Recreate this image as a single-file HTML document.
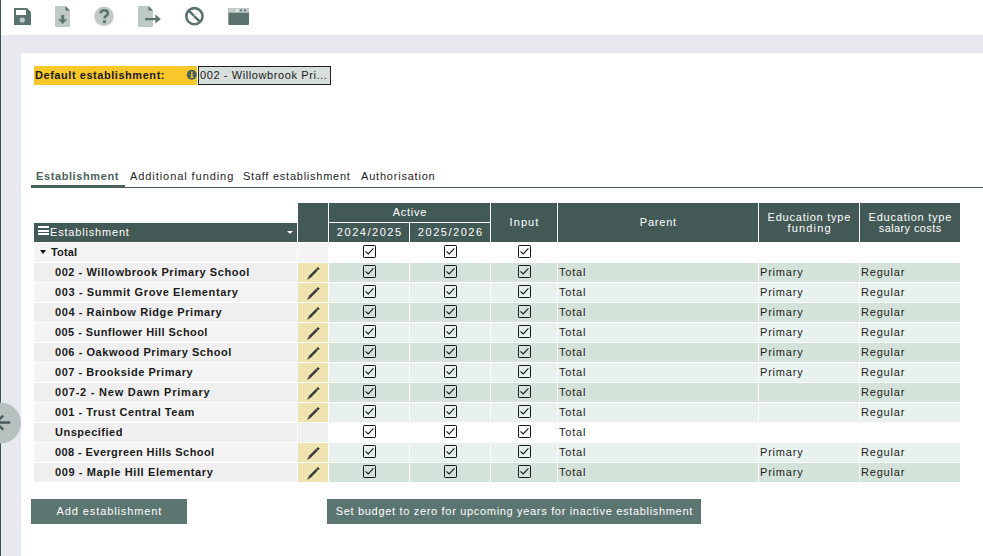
<!DOCTYPE html>
<html><head><meta charset="utf-8">
<style>
*{box-sizing:border-box;margin:0;padding:0}
html,body{width:983px;height:556px;overflow:hidden;background:#fff;font-family:"Liberation Sans",sans-serif;color:#1a1a1a}
#edge{position:absolute;left:0;top:0;width:1px;height:556px;background:#3d5450}
#band{position:absolute;left:1px;top:35px;width:982px;height:521px;background:#e8e9ee}
#content{position:absolute;left:21px;top:53px;width:962px;height:503px;background:#fff}
#deflbl{position:absolute;left:34px;top:66px;width:163px;height:19px;background:#f8c72a;font-weight:bold;font-size:11px;letter-spacing:.55px;line-height:19px;padding-left:1px}
#definfo{position:absolute;left:187px;top:70px;width:10px;height:10px;border-radius:50%;background:#4b605c;color:#fff;font-size:8px;line-height:10px;text-align:center;font-weight:bold}
#defval{position:absolute;left:198px;top:66px;width:133px;height:19px;background:#d7dedb;border:1px solid #222;font-size:11px;letter-spacing:.6px;line-height:17px;padding-left:1px;color:#1a1a1a;white-space:nowrap;overflow:hidden}
#tabs{position:absolute;left:32px;top:165px;width:951px;height:23px;border-bottom:1px solid #4b605c}
.tab{position:absolute;top:0;height:22px;font-size:11px;line-height:22px;color:#1e1e1e}
.tab.act{font-weight:bold;color:#4b605c;border-bottom:3px solid #4b605c}
.c{position:absolute;font-size:11px;line-height:19px;white-space:nowrap;overflow:hidden}
.h{background:#435955;color:#fff;text-align:center}
.hl{text-align:left}
.hamb{position:absolute;left:4px;top:3px;width:11px;height:9px}
.hamb i{display:block;height:2px;background:#fff;margin-bottom:1.5px}
.ht{position:absolute;left:16px;top:0}
.dd{position:absolute;right:4.5px;top:7.8px;width:0;height:0;border-left:3.7px solid transparent;border-right:3.7px solid transparent;border-top:3.8px solid #fff}
.t1,.t2{display:block}
.t3{display:block;line-height:39px}
.t4{display:block;line-height:11px;padding-top:9px}
.e1{background:#f4f4f4}
.e2{background:#efefef}
.ed{background:#efe3b0}
.wh{background:#fff}
.g1{background:#d4e3d9}
.g2{background:#e8f1ee}
.tri{position:absolute;left:5.5px;top:7px;width:0;height:0;border-left:3.5px solid transparent;border-right:3.5px solid transparent;border-top:4px solid #111}
.nm{position:absolute;left:21px;top:0;font-weight:bold;font-size:11px}
.nm.tot{left:17px}
.pen{position:absolute;left:0;top:0}
.ck{position:absolute;left:50%;top:2px;margin-left:-6px;width:13px;height:13px}
.ck svg{display:block}
.tx{padding-left:1px;letter-spacing:.8px;color:#1c1c1c}
.btn{position:absolute;background:#5b7570;color:#fff;font-size:11px;text-align:center}

</style></head><body>
<div id="edge"></div>
<div id="band"></div>
<div id="content"></div>
<svg id="icons" style="position:absolute;left:0;top:0" width="260" height="35" viewBox="0 0 260 35">
 <!-- save -->
 <path d="M14 8.5 Q14 8 14.5 8 L27 8 L31 12 L31 24.5 Q31 25 30.5 25 L14.5 25 Q14 25 14 24.5 Z" fill="#5a736e"/>
 <rect x="16" y="10" width="10" height="5" fill="#fff"/>
 <circle cx="22.3" cy="20" r="2.6" fill="#c2cbc8"/>
 <!-- download -->
 <path d="M56 6 L65.5 6 L70 10.5 L70 26 Q70 27 69 27 L56 27 Q55 27 55 26 L55 7 Q55 6 56 6 Z" fill="#bfcac7"/>
 <path d="M65.5 6 L70 10.5 L65.5 10.5 Z" fill="#5a736e"/>
 <rect x="61.2" y="15" width="3" height="4.5" fill="#5a736e"/>
 <path d="M58 19.3 L67.3 19.3 L62.65 24 Z" fill="#5a736e"/>
 <!-- help -->
 <circle cx="104" cy="16.4" r="9.8" fill="#bfcac7"/>
 <path d="M100.6 13.2 Q101 10.3 104.2 10.3 Q107.8 10.3 107.8 13.3 Q107.8 15.2 105.8 16.1 Q104.6 16.7 104.6 18.5" fill="none" stroke="#5a736e" stroke-width="2.6"/>
 <rect x="103" y="20.3" width="3" height="2.8" fill="#5a736e"/>
 <!-- export -->
 <path d="M139 6 L148.5 6 L153 10.5 L153 26 Q153 27 152 27 L139 27 Q138 27 138 26 L138 7 Q138 6 139 6 Z" fill="#bfcac7"/>
 <path d="M148.5 6 L153 10.5 L148.5 10.5 Z" fill="#5a736e"/>
 <rect x="145" y="18" width="11" height="2.2" fill="#5a736e"/>
 <path d="M155.4 14.6 L160.8 19.1 L155.4 23.5 Z" fill="#5a736e"/>
 <!-- cancel -->
 <circle cx="194.4" cy="16.2" r="8.1" fill="none" stroke="#5a736e" stroke-width="2.6"/>
 <path d="M188.8 10.6 L200 21.8" stroke="#5a736e" stroke-width="2.6"/>
 <path d="M196 12.5 L198 14.5 M192 18 L194 20 M197 13 L193.5 16.5" stroke="#d3d9d7" stroke-width="0.8"/>
 <!-- window -->
 <path d="M229.3 8 L248 8 Q249 8 249 9 L249 24 Q249 25 248 25 L229.3 25 Q228.3 25 228.3 24 L228.3 9 Q228.3 8 229.3 8 Z" fill="#5a736e"/>
 <path d="M229.3 8 L248 8 Q249 8 249 9 L249 12.8 L228.3 12.8 L228.3 9 Q228.3 8 229.3 8 Z" fill="#c2cbc8"/>
 <circle cx="237" cy="10.4" r="1.1" fill="#fff"/>
 <circle cx="241" cy="10.4" r="1.1" fill="#5a736e"/>
 <circle cx="245" cy="10.4" r="1.1" fill="#5a736e"/>
</svg>
<svg style="position:absolute;left:0;top:400px" width="22" height="46" viewBox="0 0 22 46">
 <circle cx="0.3" cy="23" r="20.6" fill="#b5c0bf"/>
 <rect x="0" y="21.3" width="10.2" height="2.4" fill="#435955"/>
 <path d="M3.2 15.6 L-4 22.6 L3.2 29.6" fill="none" stroke="#435955" stroke-width="2.3"/>
</svg>
<div id="deflbl">Default establishment:</div>
<svg style="position:absolute;left:186px;top:69px" width="12" height="12" viewBox="0 0 12 12"><circle cx="5.8" cy="5.8" r="5" fill="#4b605c"/><rect x="5" y="2.6" width="1.7" height="1.5" fill="#f8c72a"/><path d="M4.5 4.8 L6.7 4.8 L6.7 7.9 L7.4 7.9 L7.4 8.9 L4.4 8.9 L4.4 7.9 L5.1 7.9 L5.1 5.7 L4.5 5.7 Z" fill="#f8c72a"/></svg>
<div id="defval">002 - Willowbrook Pri...</div>
<div id="tabs">
<div class="tab act" style="left:-1px;width:94px;height:23px;padding-left:5px;letter-spacing:.6px">Establishment</div>
<div class="tab" style="left:98px;letter-spacing:.93px">Additional funding</div>
<div class="tab" style="left:211px;letter-spacing:.75px">Staff establishment</div>
<div class="tab" style="left:329px;letter-spacing:.79px">Authorisation</div>
</div>
<div class="c h hl" style="left:34px;top:223px;width:263px;height:19px;"><span class="hamb"><i></i><i></i><i></i></span><span class="ht" style="letter-spacing:.82px">Establishment</span><span class="dd"></span></div>
<div class="c h" style="left:298px;top:203px;width:30px;height:39px;"></div>
<div class="c h" style="left:329px;top:203px;width:161px;height:19px;"><span class="t1" style="letter-spacing:.72px;padding-left:.72px">Active</span></div>
<div class="c h" style="left:329px;top:223px;width:80px;height:19px;"><span class="t2" style="letter-spacing:1.54px;padding-left:1.54px">2024/2025</span></div>
<div class="c h" style="left:410px;top:223px;width:80px;height:19px;"><span class="t2" style="letter-spacing:1.54px;padding-left:1.54px">2025/2026</span></div>
<div class="c h" style="left:491px;top:203px;width:66px;height:39px;"><span class="t3" style="letter-spacing:1.07px;padding-left:1.07px">Input</span></div>
<div class="c h" style="left:558px;top:203px;width:200px;height:39px;"><span class="t3" style="letter-spacing:.78px;padding-left:.78px">Parent</span></div>
<div class="c h" style="left:759px;top:203px;width:100px;height:39px;"><span class="t4"><span style="letter-spacing:.77px;padding-left:.77px">Education type</span><br><span style="letter-spacing:1.18px;padding-left:1.18px">funding</span></span></div>
<div class="c h" style="left:860px;top:203px;width:100px;height:39px;"><span class="t4"><span style="letter-spacing:.77px;padding-left:.77px">Education type</span><br><span style="letter-spacing:.39px;padding-left:.39px">salary costs</span></span></div>
<div class="c e1" style="left:34px;top:243px;width:263px;height:19px;"><span class="tri"></span><span class="nm tot" style="letter-spacing:0.18px">Total</span></div>
<div class="c e1" style="left:298px;top:243px;width:30px;height:19px;"></div>
<div class="c wh" style="left:329px;top:243px;width:80px;height:19px;"><span class="ck"><svg width="13" height="13" viewBox="0 0 13 13"><rect x="0.5" y="0.5" width="12" height="12" rx="0.7" fill="none" stroke="#151515" stroke-width="1"/><path d="M2.5 6.4 L5.2 8.9 L10.4 3.3" fill="none" stroke="#151515" stroke-width="1.1"/></svg></span></div>
<div class="c wh" style="left:410px;top:243px;width:80px;height:19px;"><span class="ck"><svg width="13" height="13" viewBox="0 0 13 13"><rect x="0.5" y="0.5" width="12" height="12" rx="0.7" fill="none" stroke="#151515" stroke-width="1"/><path d="M2.5 6.4 L5.2 8.9 L10.4 3.3" fill="none" stroke="#151515" stroke-width="1.1"/></svg></span></div>
<div class="c wh" style="left:491px;top:243px;width:66px;height:19px;"><span class="ck"><svg width="13" height="13" viewBox="0 0 13 13"><rect x="0.5" y="0.5" width="12" height="12" rx="0.7" fill="none" stroke="#151515" stroke-width="1"/><path d="M2.5 6.4 L5.2 8.9 L10.4 3.3" fill="none" stroke="#151515" stroke-width="1.1"/></svg></span></div>
<div class="c wh tx" style="left:558px;top:243px;width:200px;height:19px;"></div>
<div class="c wh tx" style="left:759px;top:243px;width:100px;height:19px;"></div>
<div class="c wh tx" style="left:860px;top:243px;width:100px;height:19px;"></div>
<div class="c e2" style="left:34px;top:263px;width:263px;height:19px;"><span class="nm" style="letter-spacing:0.553px">002 - Willowbrook Primary School</span></div>
<div class="c ed" style="left:298px;top:263px;width:30px;height:19px;"><svg class="pen" width="30" height="19" viewBox="0 0 30 19"><path d="M9.0 16.9 L11.1 12.7 L19.9 3.9 L21.7 5.7 L12.9 14.5 Z" fill="#383838"/><path d="M17.5 5.3 L20.3 8.1" stroke="#efe3b0" stroke-width="0.6"/><path d="M10.9 12.4 L13.1 14.7" stroke="#6f6c60" stroke-width="0.5"/></svg></div>
<div class="c g1" style="left:329px;top:263px;width:80px;height:19px;"><span class="ck"><svg width="13" height="13" viewBox="0 0 13 13"><rect x="0.5" y="0.5" width="12" height="12" rx="0.7" fill="none" stroke="#151515" stroke-width="1"/><path d="M2.5 6.4 L5.2 8.9 L10.4 3.3" fill="none" stroke="#151515" stroke-width="1.1"/></svg></span></div>
<div class="c g1" style="left:410px;top:263px;width:80px;height:19px;"><span class="ck"><svg width="13" height="13" viewBox="0 0 13 13"><rect x="0.5" y="0.5" width="12" height="12" rx="0.7" fill="none" stroke="#151515" stroke-width="1"/><path d="M2.5 6.4 L5.2 8.9 L10.4 3.3" fill="none" stroke="#151515" stroke-width="1.1"/></svg></span></div>
<div class="c g1" style="left:491px;top:263px;width:66px;height:19px;"><span class="ck"><svg width="13" height="13" viewBox="0 0 13 13"><rect x="0.5" y="0.5" width="12" height="12" rx="0.7" fill="none" stroke="#151515" stroke-width="1"/><path d="M2.5 6.4 L5.2 8.9 L10.4 3.3" fill="none" stroke="#151515" stroke-width="1.1"/></svg></span></div>
<div class="c g1 tx" style="left:558px;top:263px;width:200px;height:19px;">Total</div>
<div class="c g1 tx" style="left:759px;top:263px;width:100px;height:19px;">Primary</div>
<div class="c g1 tx" style="left:860px;top:263px;width:100px;height:19px;">Regular</div>
<div class="c e1" style="left:34px;top:283px;width:263px;height:19px;"><span class="nm" style="letter-spacing:0.618px">003 - Summit Grove Elementary</span></div>
<div class="c ed" style="left:298px;top:283px;width:30px;height:19px;"><svg class="pen" width="30" height="19" viewBox="0 0 30 19"><path d="M9.0 16.9 L11.1 12.7 L19.9 3.9 L21.7 5.7 L12.9 14.5 Z" fill="#383838"/><path d="M17.5 5.3 L20.3 8.1" stroke="#efe3b0" stroke-width="0.6"/><path d="M10.9 12.4 L13.1 14.7" stroke="#6f6c60" stroke-width="0.5"/></svg></div>
<div class="c g2" style="left:329px;top:283px;width:80px;height:19px;"><span class="ck"><svg width="13" height="13" viewBox="0 0 13 13"><rect x="0.5" y="0.5" width="12" height="12" rx="0.7" fill="none" stroke="#151515" stroke-width="1"/><path d="M2.5 6.4 L5.2 8.9 L10.4 3.3" fill="none" stroke="#151515" stroke-width="1.1"/></svg></span></div>
<div class="c g2" style="left:410px;top:283px;width:80px;height:19px;"><span class="ck"><svg width="13" height="13" viewBox="0 0 13 13"><rect x="0.5" y="0.5" width="12" height="12" rx="0.7" fill="none" stroke="#151515" stroke-width="1"/><path d="M2.5 6.4 L5.2 8.9 L10.4 3.3" fill="none" stroke="#151515" stroke-width="1.1"/></svg></span></div>
<div class="c g2" style="left:491px;top:283px;width:66px;height:19px;"><span class="ck"><svg width="13" height="13" viewBox="0 0 13 13"><rect x="0.5" y="0.5" width="12" height="12" rx="0.7" fill="none" stroke="#151515" stroke-width="1"/><path d="M2.5 6.4 L5.2 8.9 L10.4 3.3" fill="none" stroke="#151515" stroke-width="1.1"/></svg></span></div>
<div class="c g2 tx" style="left:558px;top:283px;width:200px;height:19px;">Total</div>
<div class="c g2 tx" style="left:759px;top:283px;width:100px;height:19px;">Primary</div>
<div class="c g2 tx" style="left:860px;top:283px;width:100px;height:19px;">Regular</div>
<div class="c e2" style="left:34px;top:303px;width:263px;height:19px;"><span class="nm" style="letter-spacing:0.58px">004 - Rainbow Ridge Primary</span></div>
<div class="c ed" style="left:298px;top:303px;width:30px;height:19px;"><svg class="pen" width="30" height="19" viewBox="0 0 30 19"><path d="M9.0 16.9 L11.1 12.7 L19.9 3.9 L21.7 5.7 L12.9 14.5 Z" fill="#383838"/><path d="M17.5 5.3 L20.3 8.1" stroke="#efe3b0" stroke-width="0.6"/><path d="M10.9 12.4 L13.1 14.7" stroke="#6f6c60" stroke-width="0.5"/></svg></div>
<div class="c g1" style="left:329px;top:303px;width:80px;height:19px;"><span class="ck"><svg width="13" height="13" viewBox="0 0 13 13"><rect x="0.5" y="0.5" width="12" height="12" rx="0.7" fill="none" stroke="#151515" stroke-width="1"/><path d="M2.5 6.4 L5.2 8.9 L10.4 3.3" fill="none" stroke="#151515" stroke-width="1.1"/></svg></span></div>
<div class="c g1" style="left:410px;top:303px;width:80px;height:19px;"><span class="ck"><svg width="13" height="13" viewBox="0 0 13 13"><rect x="0.5" y="0.5" width="12" height="12" rx="0.7" fill="none" stroke="#151515" stroke-width="1"/><path d="M2.5 6.4 L5.2 8.9 L10.4 3.3" fill="none" stroke="#151515" stroke-width="1.1"/></svg></span></div>
<div class="c g1" style="left:491px;top:303px;width:66px;height:19px;"><span class="ck"><svg width="13" height="13" viewBox="0 0 13 13"><rect x="0.5" y="0.5" width="12" height="12" rx="0.7" fill="none" stroke="#151515" stroke-width="1"/><path d="M2.5 6.4 L5.2 8.9 L10.4 3.3" fill="none" stroke="#151515" stroke-width="1.1"/></svg></span></div>
<div class="c g1 tx" style="left:558px;top:303px;width:200px;height:19px;">Total</div>
<div class="c g1 tx" style="left:759px;top:303px;width:100px;height:19px;">Primary</div>
<div class="c g1 tx" style="left:860px;top:303px;width:100px;height:19px;">Regular</div>
<div class="c e1" style="left:34px;top:323px;width:263px;height:19px;"><span class="nm" style="letter-spacing:0.431px">005 - Sunflower Hill School</span></div>
<div class="c ed" style="left:298px;top:323px;width:30px;height:19px;"><svg class="pen" width="30" height="19" viewBox="0 0 30 19"><path d="M9.0 16.9 L11.1 12.7 L19.9 3.9 L21.7 5.7 L12.9 14.5 Z" fill="#383838"/><path d="M17.5 5.3 L20.3 8.1" stroke="#efe3b0" stroke-width="0.6"/><path d="M10.9 12.4 L13.1 14.7" stroke="#6f6c60" stroke-width="0.5"/></svg></div>
<div class="c g2" style="left:329px;top:323px;width:80px;height:19px;"><span class="ck"><svg width="13" height="13" viewBox="0 0 13 13"><rect x="0.5" y="0.5" width="12" height="12" rx="0.7" fill="none" stroke="#151515" stroke-width="1"/><path d="M2.5 6.4 L5.2 8.9 L10.4 3.3" fill="none" stroke="#151515" stroke-width="1.1"/></svg></span></div>
<div class="c g2" style="left:410px;top:323px;width:80px;height:19px;"><span class="ck"><svg width="13" height="13" viewBox="0 0 13 13"><rect x="0.5" y="0.5" width="12" height="12" rx="0.7" fill="none" stroke="#151515" stroke-width="1"/><path d="M2.5 6.4 L5.2 8.9 L10.4 3.3" fill="none" stroke="#151515" stroke-width="1.1"/></svg></span></div>
<div class="c g2" style="left:491px;top:323px;width:66px;height:19px;"><span class="ck"><svg width="13" height="13" viewBox="0 0 13 13"><rect x="0.5" y="0.5" width="12" height="12" rx="0.7" fill="none" stroke="#151515" stroke-width="1"/><path d="M2.5 6.4 L5.2 8.9 L10.4 3.3" fill="none" stroke="#151515" stroke-width="1.1"/></svg></span></div>
<div class="c g2 tx" style="left:558px;top:323px;width:200px;height:19px;">Total</div>
<div class="c g2 tx" style="left:759px;top:323px;width:100px;height:19px;">Primary</div>
<div class="c g2 tx" style="left:860px;top:323px;width:100px;height:19px;">Regular</div>
<div class="c e2" style="left:34px;top:343px;width:263px;height:19px;"><span class="nm" style="letter-spacing:0.556px">006 - Oakwood Primary School</span></div>
<div class="c ed" style="left:298px;top:343px;width:30px;height:19px;"><svg class="pen" width="30" height="19" viewBox="0 0 30 19"><path d="M9.0 16.9 L11.1 12.7 L19.9 3.9 L21.7 5.7 L12.9 14.5 Z" fill="#383838"/><path d="M17.5 5.3 L20.3 8.1" stroke="#efe3b0" stroke-width="0.6"/><path d="M10.9 12.4 L13.1 14.7" stroke="#6f6c60" stroke-width="0.5"/></svg></div>
<div class="c g1" style="left:329px;top:343px;width:80px;height:19px;"><span class="ck"><svg width="13" height="13" viewBox="0 0 13 13"><rect x="0.5" y="0.5" width="12" height="12" rx="0.7" fill="none" stroke="#151515" stroke-width="1"/><path d="M2.5 6.4 L5.2 8.9 L10.4 3.3" fill="none" stroke="#151515" stroke-width="1.1"/></svg></span></div>
<div class="c g1" style="left:410px;top:343px;width:80px;height:19px;"><span class="ck"><svg width="13" height="13" viewBox="0 0 13 13"><rect x="0.5" y="0.5" width="12" height="12" rx="0.7" fill="none" stroke="#151515" stroke-width="1"/><path d="M2.5 6.4 L5.2 8.9 L10.4 3.3" fill="none" stroke="#151515" stroke-width="1.1"/></svg></span></div>
<div class="c g1" style="left:491px;top:343px;width:66px;height:19px;"><span class="ck"><svg width="13" height="13" viewBox="0 0 13 13"><rect x="0.5" y="0.5" width="12" height="12" rx="0.7" fill="none" stroke="#151515" stroke-width="1"/><path d="M2.5 6.4 L5.2 8.9 L10.4 3.3" fill="none" stroke="#151515" stroke-width="1.1"/></svg></span></div>
<div class="c g1 tx" style="left:558px;top:343px;width:200px;height:19px;">Total</div>
<div class="c g1 tx" style="left:759px;top:343px;width:100px;height:19px;">Primary</div>
<div class="c g1 tx" style="left:860px;top:343px;width:100px;height:19px;">Regular</div>
<div class="c e1" style="left:34px;top:363px;width:263px;height:19px;"><span class="nm" style="letter-spacing:0.529px">007 - Brookside Primary</span></div>
<div class="c ed" style="left:298px;top:363px;width:30px;height:19px;"><svg class="pen" width="30" height="19" viewBox="0 0 30 19"><path d="M9.0 16.9 L11.1 12.7 L19.9 3.9 L21.7 5.7 L12.9 14.5 Z" fill="#383838"/><path d="M17.5 5.3 L20.3 8.1" stroke="#efe3b0" stroke-width="0.6"/><path d="M10.9 12.4 L13.1 14.7" stroke="#6f6c60" stroke-width="0.5"/></svg></div>
<div class="c g2" style="left:329px;top:363px;width:80px;height:19px;"><span class="ck"><svg width="13" height="13" viewBox="0 0 13 13"><rect x="0.5" y="0.5" width="12" height="12" rx="0.7" fill="none" stroke="#151515" stroke-width="1"/><path d="M2.5 6.4 L5.2 8.9 L10.4 3.3" fill="none" stroke="#151515" stroke-width="1.1"/></svg></span></div>
<div class="c g2" style="left:410px;top:363px;width:80px;height:19px;"><span class="ck"><svg width="13" height="13" viewBox="0 0 13 13"><rect x="0.5" y="0.5" width="12" height="12" rx="0.7" fill="none" stroke="#151515" stroke-width="1"/><path d="M2.5 6.4 L5.2 8.9 L10.4 3.3" fill="none" stroke="#151515" stroke-width="1.1"/></svg></span></div>
<div class="c g2" style="left:491px;top:363px;width:66px;height:19px;"><span class="ck"><svg width="13" height="13" viewBox="0 0 13 13"><rect x="0.5" y="0.5" width="12" height="12" rx="0.7" fill="none" stroke="#151515" stroke-width="1"/><path d="M2.5 6.4 L5.2 8.9 L10.4 3.3" fill="none" stroke="#151515" stroke-width="1.1"/></svg></span></div>
<div class="c g2 tx" style="left:558px;top:363px;width:200px;height:19px;">Total</div>
<div class="c g2 tx" style="left:759px;top:363px;width:100px;height:19px;">Primary</div>
<div class="c g2 tx" style="left:860px;top:363px;width:100px;height:19px;">Regular</div>
<div class="c e2" style="left:34px;top:383px;width:263px;height:19px;"><span class="nm" style="letter-spacing:0.772px">007-2 - New Dawn Primary</span></div>
<div class="c ed" style="left:298px;top:383px;width:30px;height:19px;"><svg class="pen" width="30" height="19" viewBox="0 0 30 19"><path d="M9.0 16.9 L11.1 12.7 L19.9 3.9 L21.7 5.7 L12.9 14.5 Z" fill="#383838"/><path d="M17.5 5.3 L20.3 8.1" stroke="#efe3b0" stroke-width="0.6"/><path d="M10.9 12.4 L13.1 14.7" stroke="#6f6c60" stroke-width="0.5"/></svg></div>
<div class="c g1" style="left:329px;top:383px;width:80px;height:19px;"><span class="ck"><svg width="13" height="13" viewBox="0 0 13 13"><rect x="0.5" y="0.5" width="12" height="12" rx="0.7" fill="none" stroke="#151515" stroke-width="1"/><path d="M2.5 6.4 L5.2 8.9 L10.4 3.3" fill="none" stroke="#151515" stroke-width="1.1"/></svg></span></div>
<div class="c g1" style="left:410px;top:383px;width:80px;height:19px;"><span class="ck"><svg width="13" height="13" viewBox="0 0 13 13"><rect x="0.5" y="0.5" width="12" height="12" rx="0.7" fill="none" stroke="#151515" stroke-width="1"/><path d="M2.5 6.4 L5.2 8.9 L10.4 3.3" fill="none" stroke="#151515" stroke-width="1.1"/></svg></span></div>
<div class="c g1" style="left:491px;top:383px;width:66px;height:19px;"><span class="ck"><svg width="13" height="13" viewBox="0 0 13 13"><rect x="0.5" y="0.5" width="12" height="12" rx="0.7" fill="none" stroke="#151515" stroke-width="1"/><path d="M2.5 6.4 L5.2 8.9 L10.4 3.3" fill="none" stroke="#151515" stroke-width="1.1"/></svg></span></div>
<div class="c g1 tx" style="left:558px;top:383px;width:200px;height:19px;">Total</div>
<div class="c g1 tx" style="left:759px;top:383px;width:100px;height:19px;"></div>
<div class="c g1 tx" style="left:860px;top:383px;width:100px;height:19px;">Regular</div>
<div class="c e1" style="left:34px;top:403px;width:263px;height:19px;"><span class="nm" style="letter-spacing:0.541px">001 - Trust Central Team</span></div>
<div class="c ed" style="left:298px;top:403px;width:30px;height:19px;"><svg class="pen" width="30" height="19" viewBox="0 0 30 19"><path d="M9.0 16.9 L11.1 12.7 L19.9 3.9 L21.7 5.7 L12.9 14.5 Z" fill="#383838"/><path d="M17.5 5.3 L20.3 8.1" stroke="#efe3b0" stroke-width="0.6"/><path d="M10.9 12.4 L13.1 14.7" stroke="#6f6c60" stroke-width="0.5"/></svg></div>
<div class="c g2" style="left:329px;top:403px;width:80px;height:19px;"><span class="ck"><svg width="13" height="13" viewBox="0 0 13 13"><rect x="0.5" y="0.5" width="12" height="12" rx="0.7" fill="none" stroke="#151515" stroke-width="1"/><path d="M2.5 6.4 L5.2 8.9 L10.4 3.3" fill="none" stroke="#151515" stroke-width="1.1"/></svg></span></div>
<div class="c g2" style="left:410px;top:403px;width:80px;height:19px;"><span class="ck"><svg width="13" height="13" viewBox="0 0 13 13"><rect x="0.5" y="0.5" width="12" height="12" rx="0.7" fill="none" stroke="#151515" stroke-width="1"/><path d="M2.5 6.4 L5.2 8.9 L10.4 3.3" fill="none" stroke="#151515" stroke-width="1.1"/></svg></span></div>
<div class="c g2" style="left:491px;top:403px;width:66px;height:19px;"><span class="ck"><svg width="13" height="13" viewBox="0 0 13 13"><rect x="0.5" y="0.5" width="12" height="12" rx="0.7" fill="none" stroke="#151515" stroke-width="1"/><path d="M2.5 6.4 L5.2 8.9 L10.4 3.3" fill="none" stroke="#151515" stroke-width="1.1"/></svg></span></div>
<div class="c g2 tx" style="left:558px;top:403px;width:200px;height:19px;">Total</div>
<div class="c g2 tx" style="left:759px;top:403px;width:100px;height:19px;"></div>
<div class="c g2 tx" style="left:860px;top:403px;width:100px;height:19px;">Regular</div>
<div class="c e2" style="left:34px;top:423px;width:263px;height:19px;"><span class="nm" style="letter-spacing:0.504px">Unspecified</span></div>
<div class="c e2" style="left:298px;top:423px;width:30px;height:19px;"></div>
<div class="c wh" style="left:329px;top:423px;width:80px;height:19px;"><span class="ck"><svg width="13" height="13" viewBox="0 0 13 13"><rect x="0.5" y="0.5" width="12" height="12" rx="0.7" fill="none" stroke="#151515" stroke-width="1"/><path d="M2.5 6.4 L5.2 8.9 L10.4 3.3" fill="none" stroke="#151515" stroke-width="1.1"/></svg></span></div>
<div class="c wh" style="left:410px;top:423px;width:80px;height:19px;"><span class="ck"><svg width="13" height="13" viewBox="0 0 13 13"><rect x="0.5" y="0.5" width="12" height="12" rx="0.7" fill="none" stroke="#151515" stroke-width="1"/><path d="M2.5 6.4 L5.2 8.9 L10.4 3.3" fill="none" stroke="#151515" stroke-width="1.1"/></svg></span></div>
<div class="c wh" style="left:491px;top:423px;width:66px;height:19px;"><span class="ck"><svg width="13" height="13" viewBox="0 0 13 13"><rect x="0.5" y="0.5" width="12" height="12" rx="0.7" fill="none" stroke="#151515" stroke-width="1"/><path d="M2.5 6.4 L5.2 8.9 L10.4 3.3" fill="none" stroke="#151515" stroke-width="1.1"/></svg></span></div>
<div class="c wh tx" style="left:558px;top:423px;width:200px;height:19px;">Total</div>
<div class="c wh tx" style="left:759px;top:423px;width:100px;height:19px;"></div>
<div class="c wh tx" style="left:860px;top:423px;width:100px;height:19px;"></div>
<div class="c e1" style="left:34px;top:443px;width:263px;height:19px;"><span class="nm" style="letter-spacing:0.413px">008 - Evergreen Hills School</span></div>
<div class="c ed" style="left:298px;top:443px;width:30px;height:19px;"><svg class="pen" width="30" height="19" viewBox="0 0 30 19"><path d="M9.0 16.9 L11.1 12.7 L19.9 3.9 L21.7 5.7 L12.9 14.5 Z" fill="#383838"/><path d="M17.5 5.3 L20.3 8.1" stroke="#efe3b0" stroke-width="0.6"/><path d="M10.9 12.4 L13.1 14.7" stroke="#6f6c60" stroke-width="0.5"/></svg></div>
<div class="c g2" style="left:329px;top:443px;width:80px;height:19px;"><span class="ck"><svg width="13" height="13" viewBox="0 0 13 13"><rect x="0.5" y="0.5" width="12" height="12" rx="0.7" fill="none" stroke="#151515" stroke-width="1"/><path d="M2.5 6.4 L5.2 8.9 L10.4 3.3" fill="none" stroke="#151515" stroke-width="1.1"/></svg></span></div>
<div class="c g2" style="left:410px;top:443px;width:80px;height:19px;"><span class="ck"><svg width="13" height="13" viewBox="0 0 13 13"><rect x="0.5" y="0.5" width="12" height="12" rx="0.7" fill="none" stroke="#151515" stroke-width="1"/><path d="M2.5 6.4 L5.2 8.9 L10.4 3.3" fill="none" stroke="#151515" stroke-width="1.1"/></svg></span></div>
<div class="c g2" style="left:491px;top:443px;width:66px;height:19px;"><span class="ck"><svg width="13" height="13" viewBox="0 0 13 13"><rect x="0.5" y="0.5" width="12" height="12" rx="0.7" fill="none" stroke="#151515" stroke-width="1"/><path d="M2.5 6.4 L5.2 8.9 L10.4 3.3" fill="none" stroke="#151515" stroke-width="1.1"/></svg></span></div>
<div class="c g2 tx" style="left:558px;top:443px;width:200px;height:19px;">Total</div>
<div class="c g2 tx" style="left:759px;top:443px;width:100px;height:19px;">Primary</div>
<div class="c g2 tx" style="left:860px;top:443px;width:100px;height:19px;">Regular</div>
<div class="c e2" style="left:34px;top:463px;width:263px;height:19px;"><span class="nm" style="letter-spacing:0.614px">009 - Maple Hill Elementary</span></div>
<div class="c ed" style="left:298px;top:463px;width:30px;height:19px;"><svg class="pen" width="30" height="19" viewBox="0 0 30 19"><path d="M9.0 16.9 L11.1 12.7 L19.9 3.9 L21.7 5.7 L12.9 14.5 Z" fill="#383838"/><path d="M17.5 5.3 L20.3 8.1" stroke="#efe3b0" stroke-width="0.6"/><path d="M10.9 12.4 L13.1 14.7" stroke="#6f6c60" stroke-width="0.5"/></svg></div>
<div class="c g1" style="left:329px;top:463px;width:80px;height:19px;"><span class="ck"><svg width="13" height="13" viewBox="0 0 13 13"><rect x="0.5" y="0.5" width="12" height="12" rx="0.7" fill="none" stroke="#151515" stroke-width="1"/><path d="M2.5 6.4 L5.2 8.9 L10.4 3.3" fill="none" stroke="#151515" stroke-width="1.1"/></svg></span></div>
<div class="c g1" style="left:410px;top:463px;width:80px;height:19px;"><span class="ck"><svg width="13" height="13" viewBox="0 0 13 13"><rect x="0.5" y="0.5" width="12" height="12" rx="0.7" fill="none" stroke="#151515" stroke-width="1"/><path d="M2.5 6.4 L5.2 8.9 L10.4 3.3" fill="none" stroke="#151515" stroke-width="1.1"/></svg></span></div>
<div class="c g1" style="left:491px;top:463px;width:66px;height:19px;"><span class="ck"><svg width="13" height="13" viewBox="0 0 13 13"><rect x="0.5" y="0.5" width="12" height="12" rx="0.7" fill="none" stroke="#151515" stroke-width="1"/><path d="M2.5 6.4 L5.2 8.9 L10.4 3.3" fill="none" stroke="#151515" stroke-width="1.1"/></svg></span></div>
<div class="c g1 tx" style="left:558px;top:463px;width:200px;height:19px;">Total</div>
<div class="c g1 tx" style="left:759px;top:463px;width:100px;height:19px;">Primary</div>
<div class="c g1 tx" style="left:860px;top:463px;width:100px;height:19px;">Regular</div>
<div class="btn" style="left:31px;top:499px;width:156px;height:25px;line-height:24px;letter-spacing:.9px;padding-left:.9px">Add establishment</div>
<div class="btn" style="left:327px;top:499px;width:374px;height:25px;line-height:24px;letter-spacing:.68px;padding-left:.68px">Set budget to zero for upcoming years for inactive establishment</div>
</body></html>
